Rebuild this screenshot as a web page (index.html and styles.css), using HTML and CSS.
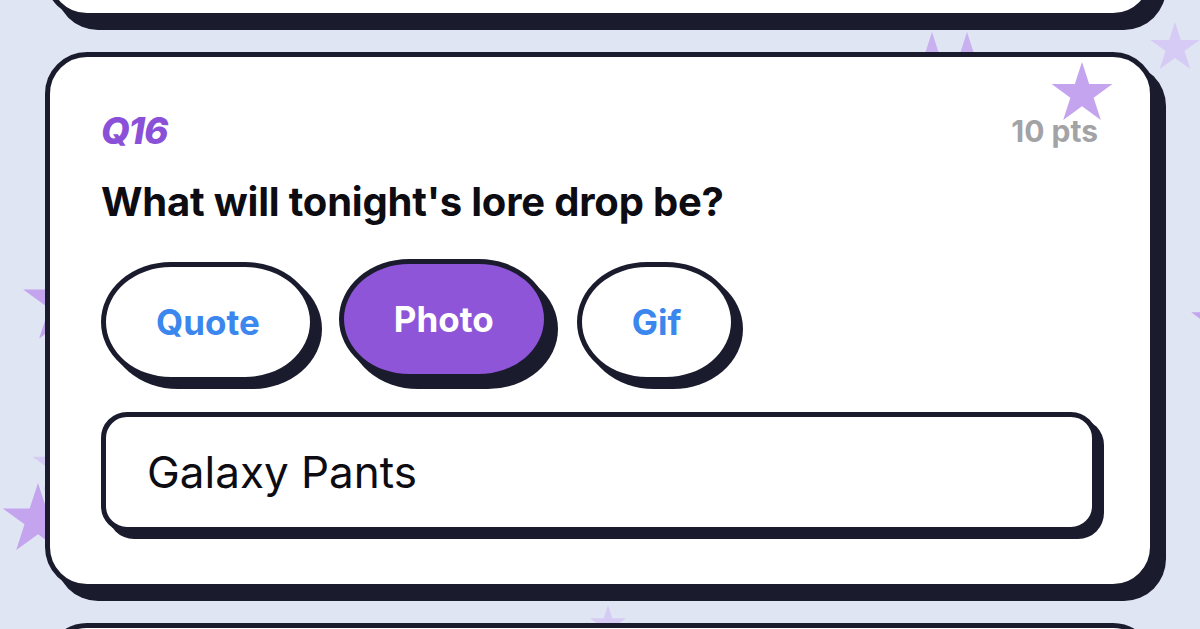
FILE: index.html
```html
<!DOCTYPE html>
<html lang="en">
<head>
  <meta charset="UTF-8">
  <meta name="viewport" content="width=device-width, initial-scale=1.0">
  <title>Lore Quiz</title>
  <link rel="stylesheet" href="styles.css">
</head>
<body>

  <svg width="0" height="0" class="defs">
    <symbol id="star" viewBox="0 0 100 100">
      <polygon points="50,0 61.23,34.55 97.55,34.55 68.17,55.9 79.39,90.45 50,69.1 20.61,90.45 31.83,55.9 2.45,34.55 38.77,34.55"/>
    </symbol>
  </svg>

  <div id="sky">
    <svg class="star star-tip-a"><use href="#star"/></svg>
    <svg class="star star-tip-b"><use href="#star"/></svg>
    <svg class="star star-corner light"><use href="#star"/></svg>
    <svg class="star star-left"><use href="#star"/></svg>
    <svg class="star star-left-small light"><use href="#star"/></svg>
    <svg class="star star-bottom-left"><use href="#star"/></svg>
    <svg class="star star-right"><use href="#star"/></svg>
    <svg class="star star-bottom light"><use href="#star"/></svg>
  </div>

  <div id="feed">
    <div class="card card-stub"></div>

    <div class="card">
      <svg class="star star-card"><use href="#star"/></svg>

      <div class="card-head">
        <span class="qnum">Q16</span>
        <span class="pts">10 pts</span>
      </div>

      <h2 class="question">What will tonight's lore drop be?</h2>

      <div class="choices">
        <button class="choice">Quote</button>
        <button class="choice selected">Photo</button>
        <button class="choice">Gif</button>
      </div>

      <input type="text" class="answer" value="Galaxy Pants">
    </div>

    <div class="card card-stub"></div>
  </div>

</body>
</html>
```

FILE: styles.css
```css
html,
body {
  height: 629px;
  overflow: hidden;
}

body {
  font-family: 'Inter', 'Noto Sans', sans-serif;
  margin: 0;
  background-color: #dfe5f3;
  position: relative;
}

.defs {
  position: absolute;
}

#sky {
  position: absolute;
  inset: 0;
}

.star {
  position: absolute;
  fill: #c4a4ee;
}

.star.light {
  fill: #d6cbf4;
}

.star-tip-a { left: 897px; top: 32px; width: 70px; height: 70px; fill: #c9b0f0; }
.star-tip-b { left: 932px; top: 32px; width: 70px; height: 70px; fill: #c9b0f0; }
.star-corner { left: 1149px; top: 22px; width: 52px; height: 52px; }
.star-left { left: 21px; top: 259px; width: 88px; height: 88px; }
.star-left-small { left: 31px; top: 436px; width: 60px; height: 60px; }
.star-bottom-left { left: 1px; top: 483px; width: 74px; height: 74px; }
.star-right { left: 1190px; top: 295px; width: 50px; height: 50px; }
.star-bottom { left: 589px; top: 605px; width: 38px; height: 38px; }

#feed {
  position: relative;
  z-index: 1;
  display: flex;
  flex-direction: column;
  gap: 34px;
  height: 811px;
  overflow: hidden;
  padding: 0 45px;
  margin-top: -182px;
}

.card {
  position: relative;
  flex-shrink: 0;
  background-color: #ffffff;
  border: 5px solid #1b1b2e;
  border-radius: 42px;
  box-shadow: 11px 12px 0 #1b1b2e;
  padding: 52px 52px 52px 51px;
}

.card-stub {
  height: 190px;
  padding: 0;
}

.star-card {
  left: 1000px;
  top: 5px;
  width: 64px;
  height: 64px;
}

.card-head {
  position: relative;
  display: flex;
  justify-content: space-between;
  align-items: center;
}

.qnum {
  font-size: 37px;
  line-height: 1.2;
  font-weight: 800;
  font-style: italic;
  color: #8a50d8;
  letter-spacing: -1px;
}

.pts {
  font-size: 30px;
  line-height: 1.2;
  font-weight: 700;
  color: #a3a3a6;
}

.question {
  margin: 25px 0 36px;
  font-size: 40px;
  line-height: 1.2;
  font-weight: 700;
  color: #0c0c12;
  letter-spacing: -0.2px;
}

.choices {
  display: flex;
  gap: 26px;
  margin-bottom: 30px;
}

.choice {
  height: 120px;
  padding: 0 50px;
  font-family: inherit;
  font-size: 35px;
  font-weight: 700;
  color: #3b87ee;
  background-color: #ffffff;
  border: 5px solid #1b1b2e;
  border-radius: 70px / 60px;
  box-shadow: 7px 7px 0 #1b1b2e;
}

.choice.selected {
  background-color: #8e55d8;
  color: #ffffff;
  transform: translate(-2px, -3px);
  box-shadow: 9px 10px 0 #1b1b2e;
}

.answer {
  display: block;
  box-sizing: border-box;
  width: calc(100% - 1px);
  height: 120px;
  padding: 0 0 0 41px;
  font-family: inherit;
  font-size: 44px;
  color: #0c0c12;
  background-color: #ffffff;
  border: 5px solid #1b1b2e;
  border-radius: 26px;
  box-shadow: 7px 7px 0 #1b1b2e;
  outline: none;
}
```
